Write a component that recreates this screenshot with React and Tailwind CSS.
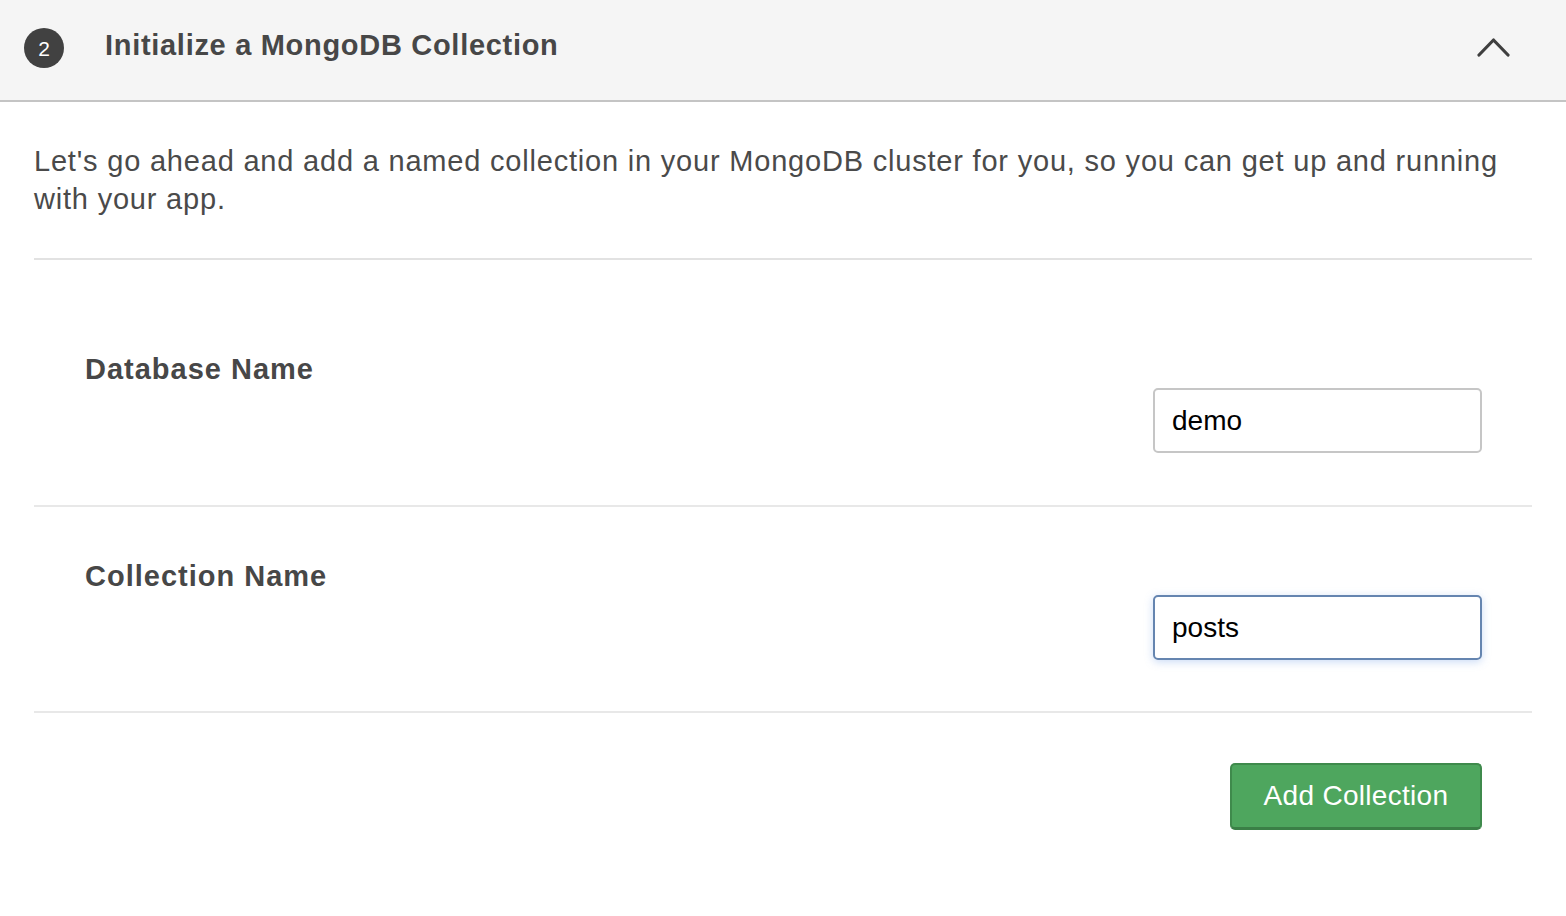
import React from "react";

export default function App() {
  const font = { fontFamily: '"Liberation Sans", Arial, sans-serif' };
  return (
    <div className="w-[1566px] min-h-[916px] bg-white" style={font}>
      <div className="h-[102px] bg-[#f5f5f5] border-b-2 border-[#c4c4c4] flex items-center pl-[24px] pr-[56px]">
        <div className="w-[40px] h-[40px] rounded-full bg-[#414141] text-white flex items-center justify-center text-[21px] leading-none -mt-[4px]">
          2
        </div>
        <div className="ml-[41px] text-[29px] font-bold text-[#474747] tracking-[0.7px] flex-1 -mt-[8px]">
          Initialize a MongoDB Collection
        </div>
        <svg width="34" height="22" viewBox="0 0 34 22" className="-mt-[6px]">
          <path d="M3 19 L17.5 4 L32 19" fill="none" stroke="#3f3f3f" strokeWidth="3.2" strokeLinecap="round" strokeLinejoin="round" />
        </svg>
      </div>
      <div className="px-[34px]">
        <p className="mt-[40px] text-[29px] leading-[38px] text-[#4a4a4a] tracking-[0.8px] pr-[30px]">
          Let's go ahead and add a named collection in your MongoDB cluster for you, so you can get up and running with your app.
        </p>
        <div className="mt-[40px] border-t-2 border-[#e2e2e2]" />
        <div className="pt-[90px] pb-[52px] pl-[51px] pr-[50px] flex justify-between">
          <div className="text-[29px] font-bold text-[#474747] leading-[38px] tracking-[1px]">Database Name</div>
          <div className="mt-[38px] w-[329px] h-[65px] border-2 border-[#c6c6c6] rounded-[5px] flex items-center px-[17px] text-[28px] text-black">
            demo
          </div>
        </div>
        <div className="border-t-2 border-[#e8e8e8]" />
        <div className="pt-[50px] pb-[51px] pl-[51px] pr-[50px] flex justify-between">
          <div className="text-[29px] font-bold text-[#474747] leading-[38px] tracking-[1px]">Collection Name</div>
          <div className="mt-[38px] w-[329px] h-[65px] border-2 border-[#6585b0] rounded-[5px] flex items-center px-[17px] text-[28px] text-black shadow-[0_2px_8px_rgba(102,153,230,0.35)]">
            posts
          </div>
        </div>
        <div className="border-t-2 border-[#e8e8e8]" />
        <div className="pt-[50px] pr-[50px] flex justify-end">
          <button className="w-[252px] h-[67px] rounded-[5px] bg-[#4ea65e] border-2 border-[#3f8a4c] border-b-[3px] border-b-[#3a7f46] text-white text-[28px] tracking-[0.3px] flex items-center justify-center">
            Add Collection
          </button>
        </div>
      </div>
    </div>
  );
}
